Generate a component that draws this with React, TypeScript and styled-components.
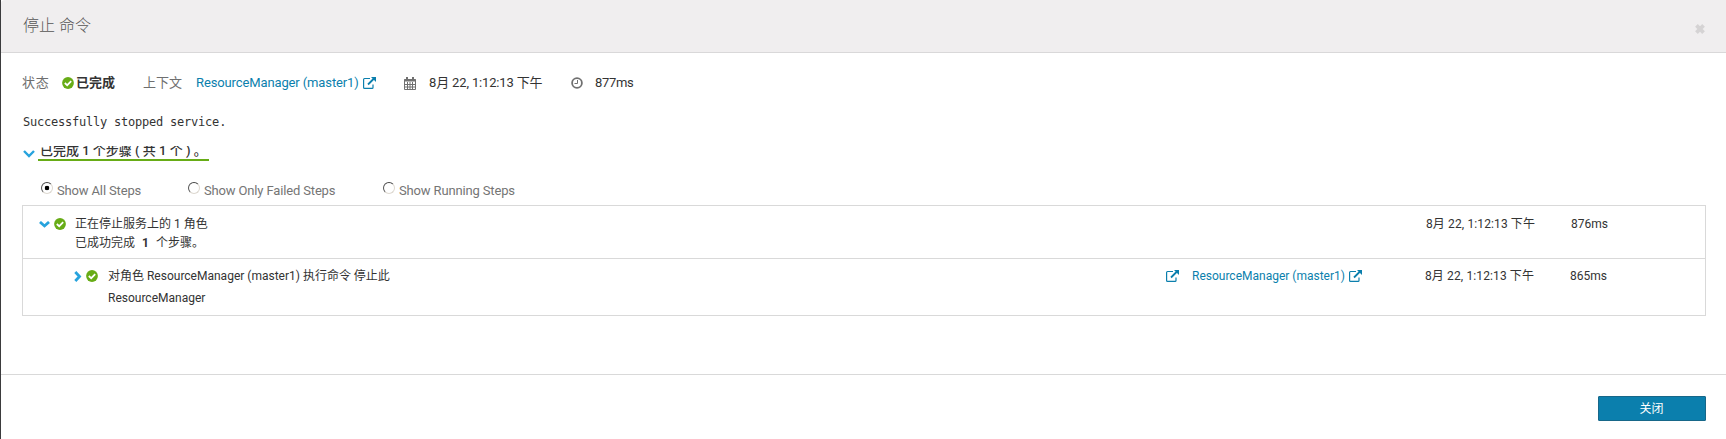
import React from 'react';
import styled, { createGlobalStyle } from 'styled-components';

const Global = createGlobalStyle`
  * { box-sizing: border-box; }
  body { margin: 0; background: #fff; }
`;

const Dialog = styled.main`
  height: 439px;
  display: flex;
  flex-direction: column;
  border-left: 1px solid #3b3b3d;
  background: #fff;
  color: #333;
  font: 13px/20px Roboto, "Noto Sans CJK SC", sans-serif;
  white-space: nowrap;
  overflow: hidden;
`;
const Header = styled.header`
  height: 53px;
  flex: none;
  display: flex;
  align-items: center;
  justify-content: space-between;
  padding: 0 20px 0 22px;
  background: #f0eeef;
  border-bottom: 1px solid #d9d8d9;
  border-top-left-radius: 4px;
`;
const Title = styled.h1`
  margin: 0;
  font-size: 16px;
  line-height: 24px;
  font-weight: 300;
  color: #555;
`;
const CloseIcon = styled.button`
  display: flex;
  border: 0;
  padding: 0;
  margin: 5px 1px 0 0;
  background: none;
`;
const Body = styled.section`
  flex: 1;
  display: flex;
  flex-direction: column;
  padding: 20px 20px 0 21px;
`;
const Summary = styled.div`
  display: flex;
  align-items: center;
  height: 20px;
`;
const Cell = styled.span<{ $w: number; $ls?: number; $tone?: 'muted' | 'link'; $bold?: boolean }>`
  flex: none;
  width: ${p => p.$w}px;
  letter-spacing: ${p => p.$ls ?? 0}px;
  color: ${p => (p.$tone === 'muted' ? '#6f6f6f' : p.$tone === 'link' ? '#0b7fad' : '#333')};
  font-weight: ${p => (p.$bold ? 700 : 400)};
  svg { display: block; }
`;
const Message = styled.pre`
  margin: 19px 0 0 1px;
  font: 12px/20px "DejaVu Sans Mono", monospace;
  letter-spacing: -0.22px;
`;
const StepsToggle = styled.div`
  display: flex;
  margin: 13px 0 0 1px;
  height: 16px;
  svg { margin-top: 5px; }
`;
const StepsTitle = styled.div`
  width: 171px;
  height: 15px;
  margin: 1px 0 0 3px;
  padding-left: 2px;
  border-bottom: 2px solid #67ac16;
  overflow: hidden;
  font-weight: 500;
  line-height: 10px;
`;
const Filters = styled.div`
  display: flex;
  height: 20px;
  margin: 20px 0 0 18px;
`;
const Filter = styled.label<{ $w: number }>`
  display: flex;
  width: ${p => p.$w}px;
  color: #757575;
  letter-spacing: -0.15px;
`;
const Radio = styled.span<{ $on?: boolean }>`
  width: 12px;
  height: 12px;
  margin: 1px 4px 0 1px;
  border-radius: 50%;
  border: 1.5px solid;
  border-color: #444 #ddd8d0 #ddd8d0 #555;
  background: ${p => (p.$on ? 'radial-gradient(circle, #000 0 2px, #fff 2.6px)' : '#fff')};
`;
const Steps = styled.div`
  border: 1px solid #d9d9d9;
  height: 111px;
  margin-top: 4px;
`;
const Step = styled.div<{ $h: number; $indent: number }>`
  display: flex;
  height: ${p => p.$h}px;
  padding: 8px 0 0 ${p => p.$indent}px;
  font-size: 12px;
  & + & { border-top: 1px solid #d9d9d9; padding-top: 7px; }
  ${Cell} svg { margin-top: 4px; }
`;
const StepIcons = styled.div`
  display: flex;
  flex: none;
  align-items: center;
  gap: 4px;
  height: 20px;
`;
const Desc = styled.div<{ $lh: number; $gap: number }>`
  flex: 1;
  margin-left: ${p => p.$gap}px;
  line-height: 20px;
  div + div { margin-top: ${p => p.$lh - 20}px; }
`;
const Count = styled.b`
  margin: 0 7px 0 7px;
`;
const Footer = styled.footer`
  height: 65px;
  flex: none;
  display: flex;
  justify-content: flex-end;
  border-top: 1px solid #d9d9d9;
  padding: 21px 20px 0;
`;
const CloseButton = styled.button`
  width: 108px;
  height: 25px;
  padding: 0 1px 0 0;
  border: 1px solid #176789;
  border-radius: 1px;
  background: #0b7fad;
  color: #fff;
  font: 12px/22px Roboto, "Noto Sans CJK SC", sans-serif;
`;

const Check = () => (
  <svg width="12" height="12" viewBox="0 0 12 12">
    <circle cx="6" cy="6" r="5.9" fill="#67ac16" />
    <path d="M2.8 6l2.4 2.2L9.2 4.1" fill="none" stroke="#fff" strokeWidth="1.7" />
  </svg>
);
const External = () => (
  <svg width="13" height="12" viewBox="0 0 13 12" fill="none" stroke="#0b7fad">
    <path d="M7 1.5H1.5Q.6 1.5.6 2.5v8q0 .9.9.9h7.6q.9 0 .9-.9V7.5" strokeWidth="1.2" />
    <path d="M5 7.5L11 1.5" strokeWidth="1.8" />
    <path d="M8 0h5v5z" fill="#0b7fad" stroke="none" />
  </svg>
);
const Chevron = ({ w = 12, h = 8, d = 'M1 1l5 5 5-5', sw = 2.4 }) => (
  <svg width={w} height={h} viewBox={`0 0 ${w} ${h}`}>
    <path d={d} fill="none" stroke="#27a3dd" strokeWidth={sw} />
  </svg>
);
const Calendar = () => (
  <svg width="13" height="13" viewBox="0 0 13 13" fill="none" stroke="#707070">
    <path d="M.5 2.5h11v10H.5zM1 7.5h10M1 10h10M3.5 5v7M6 5v7M8.5 5v7" />
    <path d="M3 0v4M9 0v4M0 3.5h12" strokeWidth="2" />
  </svg>
);
const Clock = () => (
  <svg width="12" height="12" viewBox="0 0 12 12" fill="none" stroke="#707070">
    <circle cx="6" cy="6" r="4.9" strokeWidth="1.8" />
    <path d="M6.5 3v3.5H3.5" />
  </svg>
);

export default function App() {
  return (
    <Dialog>
      <Global />
      <Header>
        <Title>停止 命令</Title>
        <CloseIcon aria-label="关闭">
          <svg width="10" height="10" viewBox="0 0 9 9">
            <path d="M1.3 1.3l6.4 6.4M7.7 1.3L1.3 7.7" stroke="#d5d3d4" strokeWidth="3.4" />
          </svg>
        </CloseIcon>
      </Header>
      <Body>
        <Summary>
          <Cell $w={40} $tone="muted" $ls={0.8}>状态</Cell>
          <Cell $w={14}><Check /></Cell>
          <Cell $w={67} $bold>已完成</Cell>
          <Cell $w={53} $tone="muted">上下文</Cell>
          <Cell $w={167} $tone="link" $ls={-0.12}>ResourceManager (master1)</Cell>
          <Cell $w={41}><External /></Cell>
          <Cell $w={25}><Calendar /></Cell>
          <Cell $w={142} $ls={-0.15}>8月 22, 1:12:13 下午</Cell>
          <Cell $w={24}><Clock /></Cell>
          <Cell $w={60} $ls={-0.3}>877ms</Cell>
        </Summary>
        <Message>Successfully stopped service.</Message>
        <StepsToggle>
          <Chevron />
          <StepsTitle>已完成 1 个步骤 ( 共 1 个 ) 。</StepsTitle>
        </StepsToggle>
        <Filters>
          <Filter $w={147}><Radio $on />Show All Steps</Filter>
          <Filter $w={195}><Radio />Show Only Failed Steps</Filter>
          <Filter $w={150}><Radio />Show Running Steps</Filter>
        </Filters>
        <Steps>
          <Step $h={52} $indent={16}>
            <StepIcons>
              <Chevron w={11} h={7} d="M1 1l4.5 4L10 1" sw={2.8} />
              <Check />
            </StepIcons>
            <Desc $lh={19} $gap={9}>
              <div>正在停止服务上的 1 角色</div>
              <div>已成功完成<Count>1</Count>个步骤。</div>
            </Desc>
            <Cell $w={145} $ls={0.12}>8月 22, 1:12:13 下午</Cell>
            <Cell $w={134}>876ms</Cell>
          </Step>
          <Step $h={57} $indent={51}>
            <StepIcons>
              <Chevron w={8} h={11} d="M1.3 1l4.2 4.5L1.3 10" sw={2.8} />
              <Check />
            </StepIcons>
            <Desc $lh={22} $gap={10}>
              <div>对角色 ResourceManager (master1) 执行命令 停止此</div>
              <div>ResourceManager</div>
            </Desc>
            <Cell $w={26}><External /></Cell>
            <Cell $w={157} $tone="link">ResourceManager (master1)</Cell>
            <Cell $w={76}><External /></Cell>
            <Cell $w={145} $ls={0.12}>8月 22, 1:12:13 下午</Cell>
            <Cell $w={135}>865ms</Cell>
          </Step>
        </Steps>
      </Body>
      <Footer>
        <CloseButton>关闭</CloseButton>
      </Footer>
    </Dialog>
  );
}
